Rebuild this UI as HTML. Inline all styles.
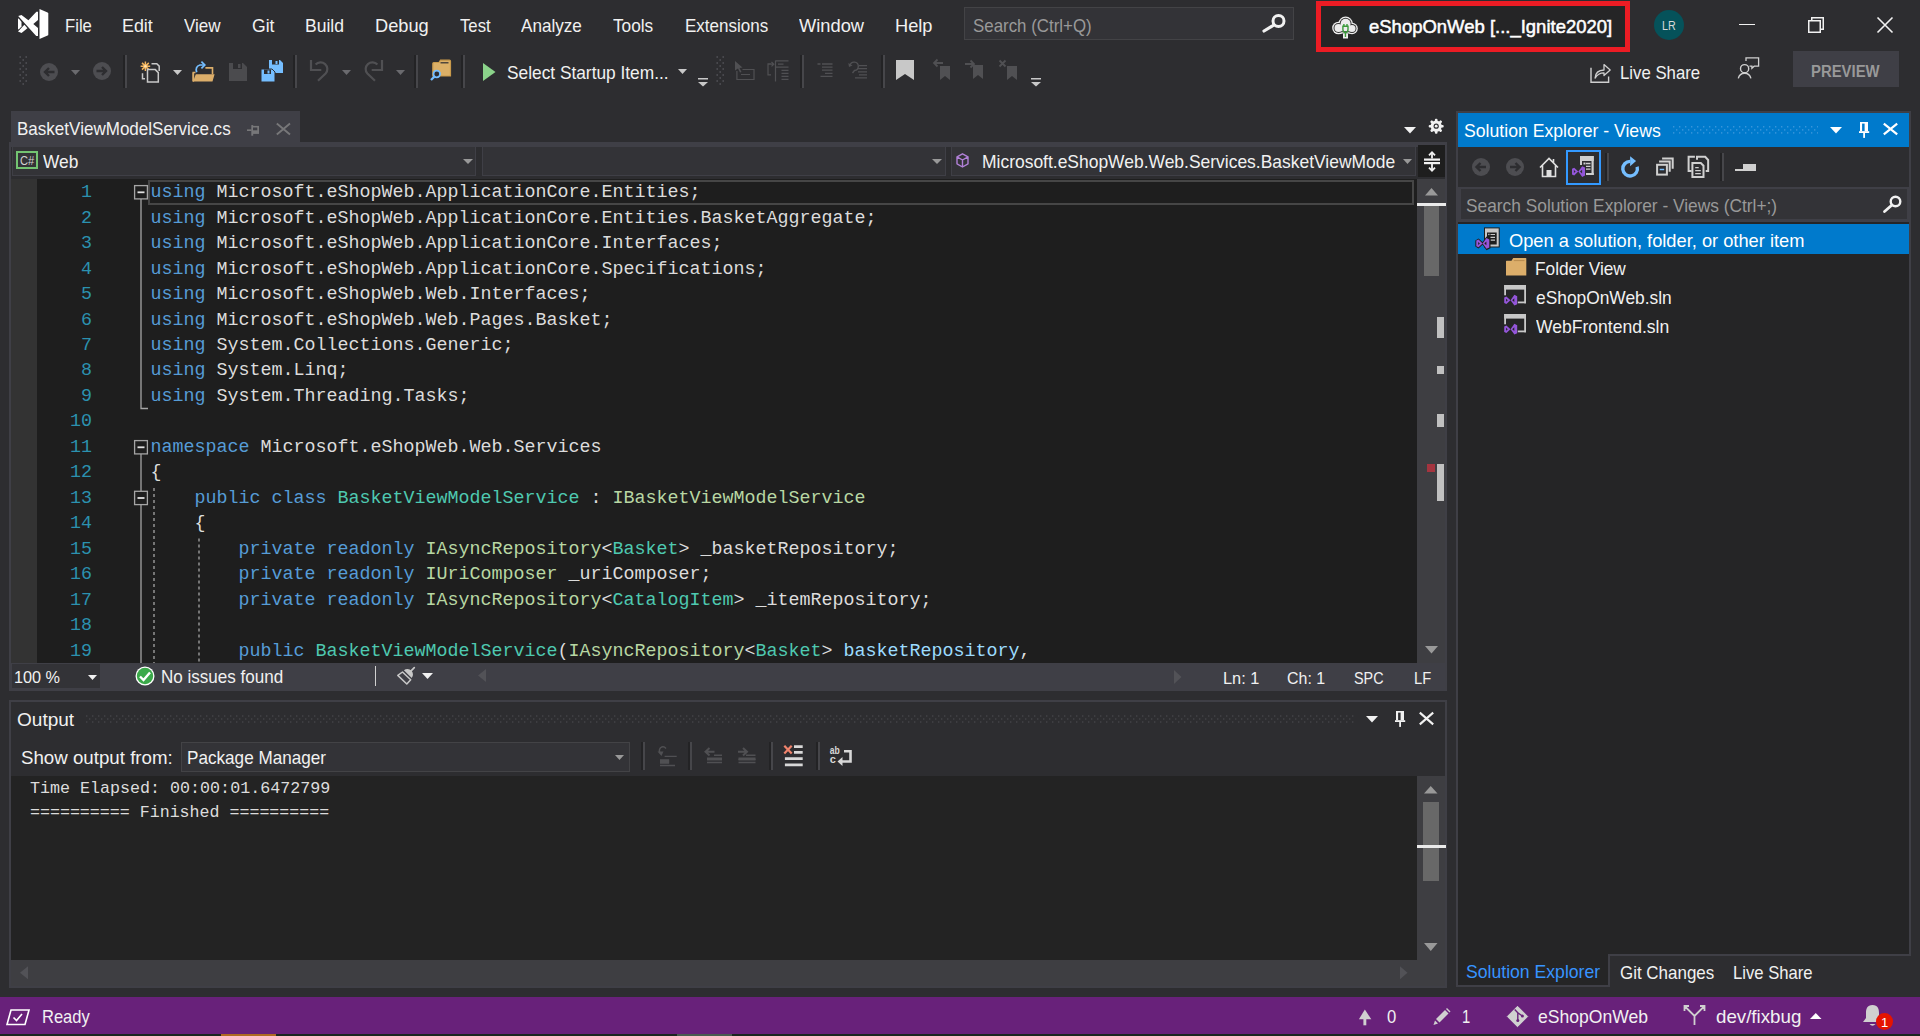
<!DOCTYPE html>
<html><head><meta charset="utf-8">
<style>
*{box-sizing:border-box;margin:0;padding:0}
html,body{width:1920px;height:1036px;overflow:hidden;background:#2D2D30;font-family:"Liberation Sans",sans-serif;color:#F1F1F1;position:relative}
.a{position:absolute}
.t{font-size:18.5px;color:#F1F1F1}
.m{font-family:"Liberation Mono",monospace}
svg{position:absolute;overflow:visible}
.sep{position:absolute;width:4px;background:linear-gradient(90deg,#232325 0,#232325 50%,#46464A 50%,#46464A 100%)}
.code{position:absolute;left:150.6px;font-family:"Liberation Mono",monospace;font-size:18.33px;line-height:25.48px;white-space:pre;color:#DCDCDC}
.ln{position:absolute;font-family:"Liberation Mono",monospace;font-size:18.33px;line-height:25.48px;white-space:pre;color:#2B91AF;text-align:right;width:60px;left:32px}
.k{color:#569CD6}.c{color:#4EC9B0}.i{color:#B8D7A3}.p{color:#9CDCFE}
</style></head>
<body>
<!--MENUBAR-->
<svg style="left:0;top:0" width="60" height="50" viewBox="0 0 60 50">
  <path d="M39.5 9 L47.6 12.4 Q48.3 12.9 48.3 13.6 V34.4 Q48.3 35.1 47.6 35.6 L39.5 39 Z" fill="#fff"></path>
  <path d="M18.2 16.1 L21.5 14.9 L28.4 20.3 L36.4 11.7 H38 V19.9 L33.3 24.1 L38 28.1 V36.1 H36.2 Z" fill="#fff"></path>
  <path d="M24.4 24.8 L27.4 28.2 L21.5 32.9 L18 31.5 Z" fill="#fff"></path>
  <path d="M18 18.2 Q19.5 18.8 21.5 22 V26.5 Q19.5 29 18 29.6 Z" fill="#fff"></path>
</svg>
<span class="t" style="position:absolute;left:65.40px;top:17.01px;line-height:18.5px;white-space:pre;transform:scaleX(0.9011);transform-origin:0 0">File</span>
<span class="t" style="position:absolute;left:122.33px;top:17.01px;line-height:18.5px;white-space:pre;transform:scaleX(0.9662);transform-origin:0 0">Edit</span>
<span class="t" style="position:absolute;left:183.80px;top:17.01px;line-height:18.5px;white-space:pre;transform:scaleX(0.9207);transform-origin:0 0">View</span>
<span class="t" style="position:absolute;left:252.00px;top:17.01px;line-height:18.5px;white-space:pre;transform:scaleX(0.9489);transform-origin:0 0">Git</span>
<span class="t" style="position:absolute;left:304.55px;top:17.01px;line-height:18.5px;white-space:pre;transform:scaleX(0.9486);transform-origin:0 0">Build</span>
<span class="t" style="position:absolute;left:374.81px;top:17.01px;line-height:18.5px;white-space:pre;transform:scaleX(0.9863);transform-origin:0 0">Debug</span>
<span class="t" style="position:absolute;left:460.00px;top:17.01px;line-height:18.5px;white-space:pre;transform:scaleX(0.9027);transform-origin:0 0">Test</span>
<span class="t" style="position:absolute;left:521.30px;top:17.01px;line-height:18.5px;white-space:pre;transform:scaleX(0.9248);transform-origin:0 0">Analyze</span>
<span class="t" style="position:absolute;left:613.30px;top:17.01px;line-height:18.5px;white-space:pre;transform:scaleX(0.9316);transform-origin:0 0">Tools</span>
<span class="t" style="position:absolute;left:684.58px;top:17.01px;line-height:18.5px;white-space:pre;transform:scaleX(0.9188);transform-origin:0 0">Extensions</span>
<span class="t" style="position:absolute;left:799.30px;top:17.01px;line-height:18.5px;white-space:pre;transform:scaleX(0.9889);transform-origin:0 0">Window</span>
<span class="t" style="position:absolute;left:895.32px;top:17.01px;line-height:18.5px;white-space:pre;transform:scaleX(0.9848);transform-origin:0 0">Help</span>

<div class="a" style="left:964px;top:7px;width:330px;height:33px;background:#333337;border:1px solid #434346"></div>
<span class="t" style="color:#999999;position:absolute;left:972.50px;top:17.01px;line-height:18.5px;white-space:pre;transform:scaleX(0.9124);transform-origin:0 0">Search (Ctrl+Q)</span>
<svg style="left:1262px;top:13px" width="25" height="19" viewBox="0 0 25 19">
  <circle cx="16.5" cy="8" r="5.5" fill="none" stroke="#F1F1F1" stroke-width="3"></circle>
  <path d="M12 12 L2 18" stroke="#F1F1F1" stroke-width="3.2" stroke-linecap="round"></path>
</svg>

<div class="a" style="left:1316px;top:1px;width:314px;height:51px;border:5px solid #EC1C24;background:#252526"></div>
<svg style="left:1332px;top:16px" width="26" height="23" viewBox="0 0 26 23">
  <g fill="#F0F0F0"><circle cx="6.5" cy="12" r="6.3"></circle><circle cx="13.6" cy="7.8" r="7.3"></circle><circle cx="20" cy="12.5" r="5.8"></circle><rect x="4" y="8" width="17" height="9.5" rx="2.3"></rect></g>
  <g fill="#333333"><circle cx="6.5" cy="12" r="5"></circle><circle cx="13.6" cy="7.8" r="6"></circle><circle cx="20" cy="12.5" r="4.5"></circle><rect x="5.3" y="9.3" width="15" height="6.9" rx="1"></rect></g>
  <g fill="#ECECEC"><circle cx="6.5" cy="12" r="4"></circle><circle cx="13.6" cy="7.8" r="5"></circle><circle cx="20" cy="12.5" r="3.5"></circle><rect x="6.3" y="10.3" width="13.5" height="4.9"></rect></g>
  <rect x="11" y="17.5" width="5" height="5" fill="#F0F0F0"></rect>
  <path d="M10.9 10.3 H16 V13.5 Q16 16.5 13.45 16.5 Q10.9 16.5 10.9 13.5 Z M13.45 16.5 V21" fill="none" stroke="#3A9A3A" stroke-width="1.4"></path>
  <path d="M11.9 8 V10.3 M15 8 V10.3" stroke="#3A9A3A" stroke-width="1.4"></path>
</svg>
<span class="t" style="-webkit-text-stroke:0.5px #FFFFFF;color:#FFFFFF;position:absolute;left:1369.00px;top:18.01px;line-height:18.5px;white-space:pre;transform:scaleX(0.9989);transform-origin:0 0">eShopOnWeb [..._Ignite2020]</span>

<div class="a" style="left:1654px;top:9.5px;width:30px;height:30px;border-radius:50%;background:#05525A"></div>
<span class="t" style="font-size:12px;color:#D8D8D8;position:absolute;left:1662.00px;top:19.51px;line-height:12px;white-space:pre;transform:scaleX(0.8932);transform-origin:0 0">LR</span>
<div class="a" style="left:1739px;top:23.5px;width:16px;height:1.5px;background:#F1F1F1"></div>
<svg style="left:1808px;top:17px" width="16" height="16" viewBox="0 0 16 16">
  <rect x="0.75" y="3.75" width="11.5" height="11.5" fill="none" stroke="#F1F1F1" stroke-width="1.5"></rect>
  <path d="M3.75 3.75 V0.75 H15.25 V12.25 H12.25" fill="none" stroke="#F1F1F1" stroke-width="1.5"></path>
</svg>
<svg style="left:1877px;top:17px" width="16" height="16" viewBox="0 0 16 16">
  <path d="M0.5 0.5 L15.5 15.5 M15.5 0.5 L0.5 15.5" stroke="#F1F1F1" stroke-width="1.6"></path>
</svg>

<!--TOOLBAR-->
<svg style="left:19px;top:56px" width="9" height="30" viewBox="0 0 9 30">
  <g fill="#5A5A5E"><rect x="0.5" y="0.3" width="1.4" height="1.4"></rect><rect x="6.5" y="0.3" width="1.4" height="1.4"></rect><rect x="3.5" y="3.3" width="1.4" height="1.4"></rect><rect x="0.5" y="6.3" width="1.4" height="1.4"></rect><rect x="6.5" y="6.3" width="1.4" height="1.4"></rect><rect x="3.5" y="9.3" width="1.4" height="1.4"></rect><rect x="0.5" y="12.3" width="1.4" height="1.4"></rect><rect x="6.5" y="12.3" width="1.4" height="1.4"></rect><rect x="3.5" y="15.3" width="1.4" height="1.4"></rect><rect x="0.5" y="18.3" width="1.4" height="1.4"></rect><rect x="6.5" y="18.3" width="1.4" height="1.4"></rect><rect x="3.5" y="21.3" width="1.4" height="1.4"></rect><rect x="0.5" y="24.3" width="1.4" height="1.4"></rect><rect x="6.5" y="24.3" width="1.4" height="1.4"></rect><rect x="3.5" y="27.3" width="1.4" height="1.4"></rect></g>
</svg>
<svg style="left:40px;top:62.5px" width="18" height="18" viewBox="0 0 18 18">
  <circle cx="9" cy="9" r="9" fill="#4D4D51"></circle>
  <path d="M14.5 9 H5.5 M9 5 L5 9 L9 13" fill="none" stroke="#2D2D30" stroke-width="2.4"></path>
</svg>
<svg style="left:71px;top:70px" width="9" height="5" viewBox="0 0 9 5"><path d="M0 0 H9 L4.5 5 Z" fill="#6A6A6E"></path></svg>
<svg style="left:93px;top:62px" width="18" height="18" viewBox="0 0 18 18">
  <circle cx="9" cy="9" r="9" fill="#4D4D51"></circle>
  <path d="M3.5 9 H12.5 M9 5 L13 9 L9 13" fill="none" stroke="#2D2D30" stroke-width="2.4"></path>
</svg>
<div class="sep" style="left:123px;top:55px;height:33px"></div>
<svg style="left:140px;top:61px" width="21" height="22" viewBox="0 0 21 22">
  <path d="M5.4 0.5 V10 M0.6 5.25 H10.2 M2 1.85 L8.8 8.65 M8.8 1.85 L2 8.65" stroke="#F2B55E" stroke-width="1.5"></path>
  <circle cx="5.4" cy="5.25" r="1.3" fill="#FFE3B0"></circle>
  <path d="M11.5 2.75 H16.8 L19.2 5.1 V10" fill="none" stroke="#C8C8C8" stroke-width="1.5"></path>
  <path d="M7.5 8.6 H15.3 L18.3 11.6 V21.1 H7.5 Z" fill="#2D2D30" stroke="#C8C8C8" stroke-width="1.5"></path>
  <path d="M2.5 12.3 V17.75 H5" fill="none" stroke="#C8C8C8" stroke-width="1.5"></path>
</svg>
<svg style="left:173px;top:70px" width="9" height="5" viewBox="0 0 9 5"><path d="M0 0 H9 L4.5 5 Z" fill="#C8C8C8"></path></svg>
<svg style="left:192px;top:60px" width="24" height="22" viewBox="0 0 24 22">
  <path d="M1.3 21.25 V12.5 H3.5 M13.4 7.9 H20.5 V14.2" fill="none" stroke="#DCAE6A" stroke-width="1.6"></path>
  <path d="M3.8 14.2 H22.6 L20.5 21.6 H1 Z" fill="#DCAE6A"></path>
  <path d="M1.3 12.5 V21.6" stroke="#DCAE6A" stroke-width="1.6"></path>
  <path d="M4.7 12.2 Q2.8 6.5 8 5 H12" fill="none" stroke="#75BEFF" stroke-width="1.7"></path>
  <path d="M9.4 1.6 L12.8 5 L9.4 8.4" fill="none" stroke="#75BEFF" stroke-width="1.7"></path>
</svg>
<svg style="left:229px;top:62.5px" width="18" height="18" viewBox="0 0 18 18">
  <path d="M0 0 H14 L18 4 V18 H0 Z" fill="#4B4B4E"></path>
  <rect x="4" y="0" width="9" height="6" fill="#2D2D30"></rect><rect x="9" y="1" width="2.5" height="4" fill="#4B4B4E"></rect>
</svg>
<svg style="left:261px;top:60px" width="22" height="22" viewBox="0 0 22 22">
  <path d="M8 0 H19 L22 3 V13 H8 Z" fill="#75BEFF"></path>
  <rect x="11" y="0" width="7" height="4.5" fill="#2D2D30"></rect><rect x="14.5" y="1" width="2" height="3" fill="#75BEFF"></rect>
  <path d="M0 9 H11 L14 12 V22 H0 Z" fill="#75BEFF" stroke="#2D2D30" stroke-width="1"></path>
  <rect x="3" y="9.5" width="7" height="4.5" fill="#2D2D30"></rect><rect x="6.5" y="10.5" width="2" height="3" fill="#75BEFF"></rect>
</svg>
<div class="sep" style="left:293px;top:55px;height:33px"></div>
<svg style="left:309.5px;top:60px" width="18" height="22" viewBox="0 0 18 22">
  <path d="M1 0 V10 H11.3" fill="none" stroke="#505053" stroke-width="2.2"></path>
  <path d="M5.6 4.6 A6.5 6.5 0 0 1 15.6 13.6 L8 20.8" fill="none" stroke="#505053" stroke-width="2.2"></path>
</svg>
<svg style="left:342px;top:70px" width="9" height="5" viewBox="0 0 9 5"><path d="M0 0 H9 L4.5 5 Z" fill="#6A6A6E"></path></svg>
<svg style="left:364.5px;top:60px" width="18" height="22" viewBox="0 0 18 22">
  <g transform="translate(18 0) scale(-1 1)">
  <path d="M1 0 V10 H11.3" fill="none" stroke="#505053" stroke-width="2.2"></path>
  <path d="M5.6 4.6 A6.5 6.5 0 0 1 15.6 13.6 L8 20.8" fill="none" stroke="#505053" stroke-width="2.2"></path>
  </g>
</svg>
<svg style="left:396px;top:70px" width="9" height="5" viewBox="0 0 9 5"><path d="M0 0 H9 L4.5 5 Z" fill="#6A6A6E"></path></svg>
<div class="sep" style="left:414px;top:55px;height:33px"></div>
<svg style="left:430px;top:59px" width="22" height="22" viewBox="0 0 22 22">
  <path d="M2.8 17 V4.5 Q2.8 3.5 3.8 3.5 H9 L10.5 1.2 H19.5 Q20.5 1.2 20.5 2.2 V17 Z" fill="#DCB067" stroke="#C99A4B" stroke-width="1.2"></path>
  <path d="M10.5 3.8 H18.5" stroke="#2D2D30" stroke-width="1.2"></path>
  <circle cx="6.8" cy="15" r="3.3" fill="#2D2D30" stroke="#75BEFF" stroke-width="1.8"></circle>
  <path d="M4.6 17.4 L1 21" stroke="#75BEFF" stroke-width="2.2"></path>
</svg>
<div class="sep" style="left:461px;top:55px;height:33px"></div>
<svg style="left:483px;top:63px" width="12.5" height="18" viewBox="0 0 12.5 18"><path d="M0 0 L12.5 9 L0 18 Z" fill="#8BD38A"></path></svg>
<span class="t" style="position:absolute;left:507.00px;top:64.01px;line-height:18.5px;white-space:pre;transform:scaleX(0.9353);transform-origin:0 0">Select Startup Item...</span>
<svg style="left:678px;top:69px" width="9" height="5" viewBox="0 0 9 5"><path d="M0 0 H9 L4.5 5 Z" fill="#C8C8C8"></path></svg>
<svg style="left:697.5px;top:77.5px" width="10" height="9" viewBox="0 0 10 9"><rect x="0" y="0" width="10" height="1.5" fill="#C8C8C8"></rect><path d="M0 4 H10 L5 8.5 Z" fill="#C8C8C8"></path></svg>
<svg style="left:716px;top:56px" width="9" height="30" viewBox="0 0 9 30">
  <g fill="#5A5A5E"><rect x="0.5" y="0.3" width="1.4" height="1.4"></rect><rect x="6.5" y="0.3" width="1.4" height="1.4"></rect><rect x="3.5" y="3.3" width="1.4" height="1.4"></rect><rect x="0.5" y="6.3" width="1.4" height="1.4"></rect><rect x="6.5" y="6.3" width="1.4" height="1.4"></rect><rect x="3.5" y="9.3" width="1.4" height="1.4"></rect><rect x="0.5" y="12.3" width="1.4" height="1.4"></rect><rect x="6.5" y="12.3" width="1.4" height="1.4"></rect><rect x="3.5" y="15.3" width="1.4" height="1.4"></rect><rect x="0.5" y="18.3" width="1.4" height="1.4"></rect><rect x="6.5" y="18.3" width="1.4" height="1.4"></rect><rect x="3.5" y="21.3" width="1.4" height="1.4"></rect><rect x="0.5" y="24.3" width="1.4" height="1.4"></rect><rect x="6.5" y="24.3" width="1.4" height="1.4"></rect><rect x="3.5" y="27.3" width="1.4" height="1.4"></rect></g>
</svg>
<svg style="left:734px;top:60px" width="22" height="21" viewBox="0 0 22 21">
  <path d="M1 1 L8.5 7.5 L5.5 8 L7.5 12 L6 12.5 L4 8.5 L1 10.5 Z" fill="#505053"></path>
  <path d="M2.9 11 V19.5 H20 V9.5 H8.5 M7 14.5 H16" fill="none" stroke="#505053" stroke-width="1.2"></path>
</svg>
<svg style="left:767px;top:60px" width="22" height="22" viewBox="0 0 22 22">
  <path d="M4 3.8 H1 V14.8 H4 M1 4.2 H6 M4.5 2 L6.8 4.2 L4.5 6.4" fill="none" stroke="#505053" stroke-width="1.2"></path>
  <path d="M8.5 0.5 V21.5 M8.5 0.8 H21.5 M8.5 7.2 H21.5 M11 4.2 H16.5 M14.5 10.3 H21.5 M14.5 13.3 H21.5 M14.5 16.3 H21.5 M14.5 19.3 H21.5" fill="none" stroke="#505053" stroke-width="1.2"></path>
</svg>
<div class="sep" style="left:800px;top:55px;height:33px"></div>
<svg style="left:817px;top:62px" width="16" height="16" viewBox="0 0 16 16">
  <path d="M0.5 2 H3.5 M5 2 H15.5 M5 5.1 H15.5 M5 8.1 H15.5 M8 11.3 H15.5 M3.5 14.4 H15.5" stroke="#505053" stroke-width="1.3"></path>
</svg>
<svg style="left:848px;top:61px" width="20" height="19" viewBox="0 0 20 19">
  <path d="M2 4.5 A4.2 4.2 0 1 1 6.5 9.5 L4.5 12" fill="none" stroke="#505053" stroke-width="1.4"></path>
  <path d="M0.3 2 L1 6 L4.5 4.5 Z" fill="#505053"></path>
  <path d="M11 4.6 H19 M10 7.7 H19 M10 10.8 H19 M11 13.8 H19 M7 16.9 H19" stroke="#505053" stroke-width="1.3"></path>
</svg>
<div class="sep" style="left:881px;top:55px;height:33px"></div>
<svg style="left:896px;top:60px" width="18" height="20" viewBox="0 0 18 20"><path d="M0 0 H18 V20 L9 14 L0 20 Z" fill="#C8C8C8"></path></svg>
<svg style="left:933px;top:60px" width="17" height="20" viewBox="0 0 17 20">
  <path d="M7 6 H17 V20 L12 16 L7 20 Z" fill="#505053"></path>
  <path d="M10 3 H1 M4.5 -0.5 L1 3 L4.5 6.5" fill="none" stroke="#505053" stroke-width="1.8"></path>
</svg>
<svg style="left:965px;top:60px" width="18" height="19" viewBox="0 0 18 19">
  <path d="M8 5 H18 V19 L13 15 L8 19 Z" fill="#505053"></path>
  <path d="M0 4 H9 M5.5 0.5 L9 4 L5.5 7.5" fill="none" stroke="#505053" stroke-width="1.8"></path>
</svg>
<svg style="left:999px;top:60px" width="18" height="20" viewBox="0 0 18 20">
  <path d="M8 6 H18 V20 L13 16 L8 20 Z" fill="#505053"></path>
  <path d="M0.5 0.5 L6.5 6.5 M6.5 0.5 L0.5 6.5" stroke="#505053" stroke-width="1.8"></path>
</svg>
<svg style="left:1031px;top:77.5px" width="10" height="9" viewBox="0 0 10 9"><rect x="0" y="0" width="10" height="1.5" fill="#C8C8C8"></rect><path d="M0 4 H10 L5 8.5 Z" fill="#C8C8C8"></path></svg>

<svg style="left:1590px;top:62px" width="22" height="22" viewBox="0 0 22 22">
  <path d="M1 5.7 V20.3 H18.6 V14.6" fill="none" stroke="#D0D0D0" stroke-width="1.4"></path>
  <path d="M5.1 16.1 Q5.5 8.2 14 8 V2.6 L20.2 7.9 L14 13.6 V10.8 Q8 10.8 5.1 16.1 Z" fill="none" stroke="#D0D0D0" stroke-width="1.3" stroke-linejoin="round"></path>
</svg>
<span class="t" style="position:absolute;left:1620.09px;top:64.01px;line-height:18.5px;white-space:pre;transform:scaleX(0.9064);transform-origin:0 0">Live Share</span>
<svg style="left:1737px;top:57px" width="23" height="23" viewBox="0 0 23 23">
  <circle cx="7.6" cy="11.7" r="4.1" fill="none" stroke="#D0D0D0" stroke-width="1.4"></circle>
  <path d="M1.3 21.3 Q2.5 16.2 7.6 16.2 Q12.7 16.2 13.9 21.3" fill="none" stroke="#D0D0D0" stroke-width="1.4"></path>
  <path d="M9 4 V0.9 H21.6 V9.2 H17.2 L14.9 11.2 V9.2 H12.5" fill="none" stroke="#D0D0D0" stroke-width="1.3"></path>
</svg>
<div class="a" style="left:1793px;top:51px;width:106px;height:36px;background:#3F3F46"></div>
<span class="t" style="font-weight:bold;font-size:16px;color:#999999;position:absolute;left:1811.07px;top:63.50px;line-height:16px;white-space:pre;transform:scaleX(0.9296);transform-origin:0 0">PREVIEW</span>
<!--/TOOLBAR-->
<!--DOCTAB-->
<div class="a" style="left:11px;top:111px;width:289px;height:31px;background:#3F3F46"></div>
<span class="t" style="position:absolute;left:16.58px;top:120.01px;line-height:18.5px;white-space:pre;transform:scaleX(0.9208);transform-origin:0 0">BasketViewModelService.cs</span>
<svg style="left:247px;top:125px" width="13" height="11" viewBox="0 0 13 11">
  <rect x="0" y="4.4" width="4.5" height="1.6" fill="#777779"></rect>
  <rect x="4.3" y="0.1" width="1.9" height="10.6" fill="#777779"></rect>
  <rect x="6" y="0.9" width="6" height="8" fill="#777779"></rect>
  <rect x="6" y="2.5" width="4.3" height="2.8" fill="#3F3F46"></rect>
</svg>
<svg style="left:276px;top:123px" width="15" height="12" viewBox="0 0 15 12">
  <path d="M0.8 0.6 L14 11.4 M14 0.6 L0.8 11.4" stroke="#777779" stroke-width="1.9"></path>
</svg>
<svg style="left:1404px;top:126.5px" width="12" height="7" viewBox="0 0 12 7"><path d="M0 0 H12 L6 6.5 Z" fill="#F1F1F1"></path></svg>
<svg style="left:1428.2px;top:118.4px" width="16.4" height="16.4" viewBox="0 0 16.4 16.4">
  <g fill="#F1F1F1"><circle cx="8.2" cy="8.2" r="5.6"></circle><rect x="6.9" y="0.7" width="2.6" height="15" rx="1" transform="rotate(0 8.2 8.2)"></rect><rect x="6.9" y="0.7" width="2.6" height="15" rx="1" transform="rotate(45 8.2 8.2)"></rect><rect x="6.9" y="0.7" width="2.6" height="15" rx="1" transform="rotate(90 8.2 8.2)"></rect><rect x="6.9" y="0.7" width="2.6" height="15" rx="1" transform="rotate(135 8.2 8.2)"></rect></g>
  <circle cx="8.2" cy="8.2" r="2.6" fill="#2D2D30"></circle>
  <circle cx="8.2" cy="8.2" r="1.4" fill="#F1F1F1"></circle>
</svg>

<!--EDITOR FRAME-->
<div class="a" style="left:9px;top:142px;width:1438px;height:549px;background:#3F3F46"></div>
<div class="a" style="left:11px;top:147px;width:1434px;height:32px;background:#2D2D30"></div>
<div class="a" style="left:12px;top:146px;width:464px;height:30px;background:#333337;border:1px solid #3F3F46"></div>
<div class="a" style="left:482px;top:146px;width:464px;height:30px;background:#333337;border:1px solid #3F3F46"></div>
<div class="a" style="left:951px;top:146px;width:465px;height:30px;background:#333337;border:1px solid #3F3F46"></div>
<div class="a" style="left:1418px;top:145px;width:27px;height:32px;background:#1E1E1E"></div>
<svg style="left:1424px;top:150.5px" width="16" height="21" viewBox="0 0 16 21">
  <path d="M8 1 V7.6 M8 13.1 V20" stroke="#F1F1F1" stroke-width="1.8"></path>
  <path d="M5 4.3 L8 1.2 L11 4.3 M5 16.7 L8 19.8 L11 16.7" fill="none" stroke="#F1F1F1" stroke-width="1.8"></path>
  <rect x="0" y="7.5" width="16" height="2.2" fill="#F1F1F1"></rect><rect x="0" y="11" width="16" height="2.2" fill="#F1F1F1"></rect>
</svg>
<div class="a" style="left:16px;top:151px;width:22px;height:18px;border:2px solid #73C372"></div>
<span class="t" style="font-size:12px;color:#D0D0D0;position:absolute;left:19.50px;top:154.51px;line-height:12px;white-space:pre;transform:scaleX(0.9256);transform-origin:0 0">C#</span>
<span class="t" style="position:absolute;left:42.50px;top:152.51px;line-height:18.5px;white-space:pre;transform:scaleX(0.9354);transform-origin:0 0">Web</span>
<svg style="left:462.5px;top:159px" width="10" height="5" viewBox="0 0 10 5"><path d="M0 0 H10 L5 5 Z" fill="#999999"></path></svg>
<svg style="left:932px;top:159px" width="10" height="5" viewBox="0 0 10 5"><path d="M0 0 H10 L5 5 Z" fill="#999999"></path></svg>
<svg style="left:956px;top:153px" width="13" height="15" viewBox="0 0 13 15">
  <path d="M6.5 0.8 L12 3.8 V10.8 L6.5 14 L1 10.8 V3.8 Z M1 3.8 L6.5 7 L12 3.8 M6.5 7 V14" fill="none" stroke="#B180D7" stroke-width="1.4" stroke-linejoin="round"></path>
</svg>
<span class="t" style="position:absolute;left:981.86px;top:153.01px;line-height:18.5px;white-space:pre;transform:scaleX(0.9433);transform-origin:0 0">Microsoft.eShopWeb.Web.Services.BasketViewMode</span>
<svg style="left:1403px;top:158.8px" width="9" height="5" viewBox="0 0 9 5"><path d="M0 0 H9 L4.5 5 Z" fill="#999999"></path></svg>

<!--EDITOR-->
<div class="a" style="left:11px;top:179px;width:1406px;height:484px;background:#1E1E1E"></div>
<div class="a" style="left:11px;top:179px;width:26px;height:484px;background:#333333"></div>
<div class="a" style="left:148px;top:179.5px;width:1266px;height:25px;border:2px solid #464646"></div>
<div class="ln" style="top:180.1px">1
2
3
4
5
6
7
8
9
10
11
12
13
14
15
16
17
18
19</div>
<div class="code" style="top:180.1px"><span class="k">using</span> Microsoft.eShopWeb.ApplicationCore.Entities;
<span class="k">using</span> Microsoft.eShopWeb.ApplicationCore.Entities.BasketAggregate;
<span class="k">using</span> Microsoft.eShopWeb.ApplicationCore.Interfaces;
<span class="k">using</span> Microsoft.eShopWeb.ApplicationCore.Specifications;
<span class="k">using</span> Microsoft.eShopWeb.Web.Interfaces;
<span class="k">using</span> Microsoft.eShopWeb.Web.Pages.Basket;
<span class="k">using</span> System.Collections.Generic;
<span class="k">using</span> System.Linq;
<span class="k">using</span> System.Threading.Tasks;

<span class="k">namespace</span> Microsoft.eShopWeb.Web.Services
{
    <span class="k">public</span> <span class="k">class</span> <span class="c">BasketViewModelService</span> : <span class="i">IBasketViewModelService</span>
    {
        <span class="k">private</span> <span class="k">readonly</span> <span class="i">IAsyncRepository</span>&lt;<span class="c">Basket</span>&gt; _basketRepository;
        <span class="k">private</span> <span class="k">readonly</span> <span class="i">IUriComposer</span> _uriComposer;
        <span class="k">private</span> <span class="k">readonly</span> <span class="i">IAsyncRepository</span>&lt;<span class="c">CatalogItem</span>&gt; _itemRepository;

        <span class="k">public</span> <span class="c">BasketViewModelService</span>(<span class="i">IAsyncRepository</span>&lt;<span class="c">Basket</span>&gt; <span class="p">basketRepository</span>,</div>
<!-- outlining -->
<svg style="left:0;top:0" width="1" height="1">
</svg>
<svg style="left:130px;top:179px" width="80" height="484" viewBox="130 179 80 484">
  <g fill="none" stroke="#A5A5A5" stroke-width="1.3">
    <rect x="134.6" y="185.6" width="12.8" height="13.3"></rect>
    <path d="M137.5 192.3 H144.5" stroke="#E0E0E0" stroke-width="1.8"></path>
    <path d="M141 199 V408.5 H148"></path>
    <rect x="134.6" y="440.6" width="12.8" height="13.3"></rect>
    <path d="M137.5 447.3 H144.5" stroke="#E0E0E0" stroke-width="1.8"></path>
    <path d="M141 454 V491"></path>
    <rect x="134.6" y="491.3" width="12.8" height="13.3"></rect>
    <path d="M137.5 498 H144.5" stroke="#E0E0E0" stroke-width="1.8"></path>
    <path d="M141 504.6 V663"></path>
  </g>
  <g stroke="#A5A5A5" stroke-width="1.3" stroke-dasharray="3 3">
    <path d="M154 488 V663"></path>
    <path d="M199 538.5 V663"></path>
  </g>
</svg>
<!-- vscroll -->
<div class="a" style="left:1417px;top:179px;width:28px;height:484px;background:#3E3E42"></div>
<svg style="left:1425px;top:187.5px" width="13" height="8" viewBox="0 0 13 8"><path d="M0 7.5 H13 L6.5 0 Z" fill="#999999"></path></svg>
<svg style="left:1425px;top:646px" width="13" height="8" viewBox="0 0 13 8"><path d="M0 0 H13 L6.5 7.5 Z" fill="#999999"></path></svg>
<div class="a" style="left:1423.5px;top:204px;width:15.5px;height:72px;background:#686868"></div>
<div class="a" style="left:1417px;top:203px;width:29px;height:2.5px;background:#EAEAEA"></div>
<div class="a" style="left:1437px;top:317px;width:7px;height:21px;background:#C0C0C0"></div>
<div class="a" style="left:1437px;top:365.5px;width:7px;height:8.5px;background:#C0C0C0"></div>
<div class="a" style="left:1437px;top:414px;width:7px;height:13px;background:#C0C0C0"></div>
<div class="a" style="left:1437px;top:463.5px;width:7px;height:37.5px;background:#C0C0C0"></div>
<div class="a" style="left:1427px;top:463.5px;width:7.5px;height:8.5px;background:#A4343F"></div>
<!--/EDITOR-->
<!--EDSTATUS-->
<div class="a" style="left:9px;top:663px;width:1438px;height:28px;background:#3F3F46"></div>
<div class="a" style="left:11.5px;top:664px;width:88.5px;height:24px;background:#333337"></div>
<span class="t" style="font-size:17px;position:absolute;left:14.04px;top:669.30px;line-height:17px;white-space:pre;transform:scaleX(0.9557);transform-origin:0 0">100 %</span>
<svg style="left:88px;top:674.5px" width="9" height="5" viewBox="0 0 9 5"><path d="M0 0 H9 L4.5 5 Z" fill="#F1F1F1"></path></svg>
<svg style="left:135.4px;top:665.8px" width="20" height="20" viewBox="0 0 20 20">
  <circle cx="10" cy="10" r="9.5" fill="#FFFFFF"></circle>
  <circle cx="10" cy="10" r="8.2" fill="#3BA94A"></circle>
  <path d="M5 10.5 L8.5 14 L15 6.5" fill="none" stroke="#FFFFFF" stroke-width="2.4"></path>
</svg>
<span class="t" style="position:absolute;left:160.58px;top:668.31px;line-height:18.5px;white-space:pre;transform:scaleX(0.9210);transform-origin:0 0">No issues found</span>
<div class="a" style="left:374.5px;top:666px;width:1.5px;height:20px;background:#D0D0D0"></div>
<svg style="left:396px;top:666px" width="20" height="20" viewBox="0 0 20 20">
  <path d="M1.8 9.4 L6.5 6 L14.7 13.7 L10.8 18 Z" fill="none" stroke="#C8C8C8" stroke-width="1.5" stroke-linejoin="round"></path>
  <path d="M7.9 4.3 A5.5 5.5 0 0 1 15.7 12 Z" fill="#C8C8C8"></path>
  <path d="M13.6 6.4 L18.3 1.7" stroke="#C8C8C8" stroke-width="1.7" stroke-linecap="round"></path>
</svg>
<svg style="left:422px;top:672.5px" width="11" height="6" viewBox="0 0 11 6"><path d="M0 0 H11 L5.5 6 Z" fill="#F1F1F1"></path></svg>
<svg style="left:478px;top:669px" width="8" height="13" viewBox="0 0 8 13"><path d="M8 0 V13 L0 6.5 Z" fill="#525257"></path></svg>
<svg style="left:1174px;top:669.5px" width="7.5" height="14" viewBox="0 0 7.5 14"><path d="M0 0 V14 L7.5 7 Z" fill="#525257"></path></svg>
<span class="t" style="font-size:17px;position:absolute;left:1223.04px;top:669.80px;line-height:17px;white-space:pre;transform:scaleX(0.9627);transform-origin:0 0">Ln: 1</span>
<span class="t" style="font-size:17px;position:absolute;left:1287.30px;top:669.80px;line-height:17px;white-space:pre;transform:scaleX(0.9383);transform-origin:0 0">Ch: 1</span>
<span class="t" style="font-size:17px;position:absolute;left:1354.40px;top:669.80px;line-height:17px;white-space:pre;transform:scaleX(0.8449);transform-origin:0 0">SPC</span>
<span class="t" style="font-size:17px;position:absolute;left:1413.53px;top:669.80px;line-height:17px;white-space:pre;transform:scaleX(0.8670);transform-origin:0 0">LF</span>

<!--OUTPUT-->
<div class="a" style="left:9px;top:699.5px;width:1438px;height:288px;background:#3F3F46"></div>
<div class="a" style="left:11px;top:701.5px;width:1434px;height:74.5px;background:#2D2D30"></div>
<span class="t" style="position:absolute;left:17.00px;top:710.81px;line-height:18.5px;white-space:pre;transform:scaleX(1.0290);transform-origin:0 0">Output</span>
<svg style="left:86px;top:715px" width="1268" height="9"><defs><pattern id="gp1" width="6" height="9" patternUnits="userSpaceOnUse"><rect x="0.1" y="0.4" width="1.2" height="1.2" fill="#4A4A4F"></rect><rect x="3.1" y="3.4" width="1.2" height="1.2" fill="#4A4A4F"></rect><rect x="0.1" y="6.4" width="1.2" height="1.2" fill="#4A4A4F"></rect></pattern></defs><rect width="1268" height="9" fill="url(#gp1)"></rect></svg>
<svg style="left:1366px;top:715.5px" width="12" height="7" viewBox="0 0 12 7"><path d="M0 0 H12 L6 6.5 Z" fill="#F1F1F1"></path></svg>
<svg style="left:1394px;top:710px" width="12" height="17" viewBox="0 0 12 17">
  <rect x="2" y="1" width="8" height="9.4" fill="#F1F1F1"></rect>
  <rect x="4.1" y="2.6" width="2.5" height="7.7" fill="#2D2D30"></rect>
  <rect x="1" y="10.2" width="10.2" height="1.8" fill="#F1F1F1"></rect>
  <rect x="5.2" y="11.9" width="1.8" height="5" fill="#F1F1F1"></rect>
</svg>
<svg style="left:1419px;top:711.5px" width="15" height="13" viewBox="0 0 15 13">
  <path d="M0.8 0.6 L14.2 12.4 M14.2 0.6 L0.8 12.4" stroke="#F1F1F1" stroke-width="2.1"></path>
</svg>
<span class="t" style="position:absolute;left:21.40px;top:748.51px;line-height:18.5px;white-space:pre;transform:scaleX(1.0108);transform-origin:0 0">Show output from:</span>
<div class="a" style="left:181px;top:741.5px;width:449px;height:30px;background:#333337;border:1px solid #434346"></div>
<span class="t" style="position:absolute;left:186.57px;top:749.01px;line-height:18.5px;white-space:pre;transform:scaleX(0.9262);transform-origin:0 0">Package Manager</span>
<svg style="left:615.4px;top:754.5px" width="9" height="5" viewBox="0 0 9 5"><path d="M0 0 H9 L4.5 5 Z" fill="#999999"></path></svg>
<div class="sep" style="left:640.5px;top:742px;height:28px"></div>
<div class="sep" style="left:688px;top:742px;height:28px"></div>
<div class="sep" style="left:768.5px;top:742px;height:28px"></div>
<div class="sep" style="left:815.5px;top:742px;height:28px"></div>
<svg style="left:656px;top:745px" width="22" height="22" viewBox="0 0 22 22">
  <path d="M5 9 Q2 6 4.5 2.8 Q7.5 0.5 10 3.5" fill="none" stroke="#505053" stroke-width="1.4"></path>
  <path d="M1.5 6.5 L5.5 11 L7.5 6.5 Z" fill="#505053"></path>
  <path d="M8.6 11.3 H20.7 M4 20.5 H19" stroke="#505053" stroke-width="1.3"></path>
  <rect x="4" y="14.2" width="9.2" height="4.6" fill="#505053"></rect>
</svg>
<svg style="left:703px;top:746px" width="20" height="18" viewBox="0 0 20 18">
  <path d="M11.5 5.7 H3 M6.5 2 L2.5 5.7 L6.5 9.4" fill="none" stroke="#505053" stroke-width="2"></path>
  <path d="M11 9.2 H19 M4 13.4 H19 M4 16.6 H19" stroke="#505053" stroke-width="1.5"></path>
  <rect x="4" y="11.5" width="15" height="2.8" fill="#505053"></rect>
</svg>
<svg style="left:737px;top:746px" width="20" height="18" viewBox="0 0 20 18">
  <path d="M1 5.7 H9.5 M6 2 L10 5.7 L6 9.4" fill="none" stroke="#505053" stroke-width="2"></path>
  <path d="M9 9.2 H18.5 M1.5 13.4 H18.5 M1.5 16.6 H18.5" stroke="#505053" stroke-width="1.5"></path>
  <rect x="1.5" y="11.5" width="17" height="2.8" fill="#505053"></rect>
</svg>
<svg style="left:783px;top:744px" width="21" height="23" viewBox="0 0 21 23">
  <path d="M1.3 1.8 L8.7 9.5 M8.7 1.8 L1.3 9.5" stroke="#F0836C" stroke-width="2.2"></path>
  <path d="M11 2.6 H19.7 M11 8.4 H19.7 M1.9 14.6 H19.7 M1.9 20.9 H19.7" stroke="#D8D8D8" stroke-width="2.8"></path>
</svg>
<svg style="left:829px;top:744px" width="24" height="23" viewBox="0 0 24 23">
  <text x="0.8" y="10" font-size="11" font-family="Liberation Sans" font-weight="bold" fill="#D8D8D8" textLength="10" lengthAdjust="spacingAndGlyphs">ab</text>
  <text x="0.8" y="19.2" font-size="11" font-family="Liberation Sans" font-weight="bold" fill="#D8D8D8">c</text>
  <path d="M15 7.2 H21.5 V17.5 H11.5" fill="none" stroke="#D8D8D8" stroke-width="2.6"></path>
  <path d="M8.5 17.5 L13.5 13 V22 Z" fill="#D8D8D8"></path>
</svg>
<div class="a" style="left:11px;top:776px;width:1406px;height:183.5px;background:#232323"></div>
<div class="a m" style="left:29px;top:776px;font-size:16.67px;line-height:23.4px;white-space:pre;color:#DCDCDC;padding-top:0px"></div>
<span class="t m" style="font-size:16.67px;color:#DCDCDC;position:absolute;left:29.50px;top:780.61px;line-height:16.67px;white-space:pre;transform:scaleX(1.0011);transform-origin:0 0">Time Elapsed: 00:00:01.6472799</span>
<span class="t m" style="font-size:16.67px;color:#DCDCDC;position:absolute;left:29.50px;top:804.50px;line-height:16.67px;white-space:pre;transform:scaleX(0.9978);transform-origin:0 0">========== Finished ==========</span>
<div class="a" style="left:1417px;top:776px;width:28px;height:183.5px;background:#3E3E42"></div>
<svg style="left:1424px;top:785.5px" width="13.5" height="7.5" viewBox="0 0 13.5 7.5"><path d="M0 7.5 H13.5 L6.75 0 Z" fill="#999999"></path></svg>
<svg style="left:1424px;top:943px" width="13.5" height="8" viewBox="0 0 13.5 8"><path d="M0 0 H13.5 L6.75 8 Z" fill="#999999"></path></svg>
<div class="a" style="left:1423px;top:802px;width:16px;height:79px;background:#686868"></div>
<div class="a" style="left:1416.5px;top:845px;width:29px;height:3px;background:#EAEAEA"></div>
<div class="a" style="left:11px;top:959.5px;width:1434px;height:26px;background:#3E3E42"></div>
<svg style="left:20px;top:965.8px" width="8" height="13.5" viewBox="0 0 8 13"><path d="M8 0 V13 L0 6.5 Z" fill="#525257"></path></svg>
<svg style="left:1400px;top:965.8px" width="7.5" height="13.5" viewBox="0 0 7.5 13"><path d="M0 0 V13 L7.5 6.5 Z" fill="#525257"></path></svg>
<!--/OUTPUT-->
<!--SE-->
<div class="a" style="left:1456px;top:111px;width:455px;height:876px;background:#3F3F46"></div>
<div class="a" style="left:1458px;top:113px;width:451px;height:34px;background:#007ACC"></div>
<span class="t" style="color:#FFFFFF;position:absolute;left:1464.00px;top:122.01px;line-height:18.5px;white-space:pre;transform:scaleX(0.9535);transform-origin:0 0">Solution Explorer - Views</span>
<svg style="left:1672px;top:126px" width="146" height="8"><defs><pattern id="gp2" width="6" height="9" patternUnits="userSpaceOnUse"><rect x="1.1" y="0.2" width="1.2" height="1.2" fill="#4DA0E0"></rect><rect x="4.1" y="3.3" width="1.2" height="1.2" fill="#4DA0E0"></rect><rect x="1.1" y="6.3" width="1.2" height="1.2" fill="#4DA0E0"></rect></pattern></defs><rect width="146" height="8" fill="url(#gp2)"></rect></svg>
<svg style="left:1830px;top:126.5px" width="12" height="6.5" viewBox="0 0 12 6.5"><path d="M0 0 H12 L6 6.5 Z" fill="#FFFFFF"></path></svg>
<svg style="left:1858px;top:121px" width="12" height="17" viewBox="0 0 12 17">
  <rect x="2" y="1" width="8" height="9.4" fill="#FFFFFF"></rect>
  <rect x="4.1" y="2.6" width="2.5" height="7.7" fill="#007ACC"></rect>
  <rect x="1" y="10.2" width="10.2" height="1.8" fill="#FFFFFF"></rect>
  <rect x="5.2" y="11.9" width="1.8" height="5" fill="#FFFFFF"></rect>
</svg>
<svg style="left:1883px;top:123px" width="15" height="12" viewBox="0 0 15 12">
  <path d="M0.8 0.6 L14.2 11.4 M14.2 0.6 L0.8 11.4" stroke="#FFFFFF" stroke-width="2.2"></path>
</svg>
<div class="a" style="left:1458px;top:147px;width:451px;height:40px;background:#2D2D30"></div>
<svg style="left:1472px;top:158px" width="18" height="18" viewBox="0 0 18 18">
  <circle cx="9" cy="9" r="9" fill="#4D4D51"></circle>
  <path d="M14 9 H5 M8.5 5 L4.5 9 L8.5 13" fill="none" stroke="#2D2D30" stroke-width="2.4"></path>
</svg>
<svg style="left:1506px;top:158px" width="18" height="18" viewBox="0 0 18 18">
  <circle cx="9" cy="9" r="9" fill="#4D4D51"></circle>
  <path d="M4 9 H13 M9.5 5 L13.5 9 L9.5 13" fill="none" stroke="#2D2D30" stroke-width="2.4"></path>
</svg>
<svg style="left:1538.5px;top:156.5px" width="20" height="20.5" viewBox="0 0 20 20.5">
  <path d="M1 10.5 L10 1.5 L19 10.5 M3.5 8.5 V19.5 H16.5 V8.5 M14.5 2 V6" fill="none" stroke="#E0E0E0" stroke-width="1.6"></path>
  <rect x="7.5" y="13" width="5" height="6.5" fill="#E0E0E0"></rect>
</svg>
<div class="a" style="left:1566px;top:150px;width:34.5px;height:34.5px;border:2.2px solid #3399FF;background:#2D2D30"></div>
<svg style="left:1572px;top:156px" width="22" height="22" viewBox="0 0 22 22">
  <path d="M8 0 H21.7 V19 H14" fill="none" stroke="#CFCFCF" stroke-width="0"></path>
  <rect x="8" y="0" width="13.7" height="5" fill="#CFCFCF"></rect>
  <rect x="8" y="0" width="2" height="9" fill="#CFCFCF"></rect>
  <rect x="19.5" y="0" width="2.2" height="19" fill="#CFCFCF"></rect>
  <rect x="14" y="17" width="7.7" height="2" fill="#CFCFCF"></rect>
  <rect x="11.5" y="6.5" width="2" height="2" fill="#CFCFCF"></rect>
  <path d="M14 7.5 H18.5 M14 10.3 H18.5 M14 13.2 H18.5" stroke="#CFCFCF" stroke-width="1.3"></path>
  <g transform="translate(0 9.6)"><path d="M0 3.2 L2.2 2.2 L6.3 6 L10.2 0.6 L13 2 V10 L10.2 11.4 L6.3 6 L2.2 9.8 L0 8.8 Z M1.9 4.5 V7.5 L3.6 6 Z M10.1 4.1 V7.9 L8 6 Z" fill="#9456DA" fill-rule="evenodd"></path></g>
</svg>
<div class="sep" style="left:1604.5px;top:153px;height:28px"></div>
<svg style="left:1620px;top:156px" width="20" height="22" viewBox="0 0 20 22">
  <path d="M10.1 5.4 A7.3 7.3 0 1 0 17.15 10.8" fill="none" stroke="#75BEFF" stroke-width="3.4"></path>
  <path d="M10.1 0.2 L16.1 5.1 L10.1 10.25 Z" fill="#75BEFF"></path>
</svg>
<svg style="left:1655px;top:157px" width="20" height="19" viewBox="0 0 20 19">
  <rect x="2.1" y="7.8" width="9.8" height="9.8" fill="none" stroke="#D0D0D0" stroke-width="2"></rect>
  <path d="M4.7 12.5 H9.2" stroke="#75BEFF" stroke-width="1.5"></path>
  <path d="M4.1 4.4 H14.7 V14.7" fill="none" stroke="#D0D0D0" stroke-width="2"></path>
  <path d="M7.1 1.4 H17.7 V11.7" fill="none" stroke="#D0D0D0" stroke-width="2"></path>
</svg>
<svg style="left:1687px;top:155px" width="23" height="24" viewBox="0 0 23 24">
  <path d="M7.9 1.8 H1.6 V16.1 H4.6" fill="none" stroke="#D0D0D0" stroke-width="2"></path>
  <path d="M10 4.8 V1.8 H18.2 L21.15 5 V16.1 H18.7" fill="none" stroke="#D0D0D0" stroke-width="2"></path>
  <path d="M5.4 8 H13.8 L16.5 10.7 V22.1 H5.4 Z" fill="#2D2D30" stroke="#D0D0D0" stroke-width="2"></path>
  <path d="M8.2 12.6 H11.7 M8.2 15.6 H13.8 M8.2 18.6 H13.8" stroke="#D0D0D0" stroke-width="1.4"></path>
</svg>
<div class="sep" style="left:1719.5px;top:153px;height:28px"></div>
<svg style="left:1734.5px;top:163.5px" width="21" height="7" viewBox="0 0 21 7">
  <rect x="0" y="5" width="21" height="2" fill="#D0D0D0"></rect><rect x="8" y="0" width="13" height="7" fill="#D0D0D0"></rect>
</svg>
<div class="a" style="left:1459.5px;top:187.5px;width:448px;height:32px;background:#333337;border:1px solid #3F3F46"></div>
<span class="t" style="color:#999999;position:absolute;left:1466.30px;top:196.51px;line-height:18.5px;white-space:pre;transform:scaleX(0.9364);transform-origin:0 0">Search Solution Explorer - Views (Ctrl+;)</span>
<svg style="left:1883px;top:194.5px" width="19" height="18" viewBox="0 0 19 18">
  <circle cx="12.5" cy="6.5" r="4.8" fill="none" stroke="#F1F1F1" stroke-width="2.4"></circle>
  <path d="M9 10 L1.5 16.5" stroke="#F1F1F1" stroke-width="2.8" stroke-linecap="round"></path>
</svg>
<div class="a" style="left:1458px;top:221.5px;width:451px;height:734px;background:#252526"></div>
<div class="a" style="left:1458px;top:223.75px;width:451px;height:30px;background:#007ACC"></div>
<svg style="left:1476px;top:227px" width="25" height="24" viewBox="0 0 25 24">
  <rect x="8" y="0.4" width="15.7" height="20.1" fill="#1E1E1E"></rect>
  <rect x="9" y="1.4" width="13.7" height="18.1" fill="#C8C8C8"></rect>
  <rect x="11" y="5.5" width="9.7" height="12" fill="#1E1E1E"></rect>
  <path d="M14.5 7.5 H19 M14.5 10.3 H19 M14.5 13.1 H19" stroke="#C8C8C8" stroke-width="1.2"></path>
  <rect x="12.2" y="6.8" width="1.3" height="1.3" fill="#C8C8C8"></rect>
  <g transform="translate(0.3 10.4)"><path d="M-1 3 L2.2 1 L6.3 4.6 L10.2 -0.8 L14.2 1.2 V10.8 L10.2 12.8 L6.3 7.4 L2.2 11 L-1 9 Z" fill="#1E1E1E"></path><path d="M0 3.2 L2.2 2.2 L6.3 6 L10.2 0.6 L13 2 V10 L10.2 11.4 L6.3 6 L2.2 9.8 L0 8.8 Z M1.9 4.5 V7.5 L3.6 6 Z M10.1 4.1 V7.9 L8 6 Z" fill="#9456DA" fill-rule="evenodd"></path></g>
</svg>
<span class="t" style="color:#FFFFFF;position:absolute;left:1508.75px;top:232.01px;line-height:18.5px;white-space:pre;transform:scaleX(0.9871);transform-origin:0 0">Open a solution, folder, or other item</span>
<svg style="left:1505.8px;top:258px" width="21" height="18" viewBox="0 0 21 18">
  <path d="M0 3.2 Q0 2.7 0.6 2.7 H5.5 L7.2 0 H19.8 Q20.3 0 20.3 0.6 V17.5 H0 Z" fill="#DCAE6A"></path>
  <path d="M7.8 2.6 H18.5" stroke="#B88C4E" stroke-width="1"></path>
</svg>
<span class="t" style="position:absolute;left:1534.82px;top:260.01px;line-height:18.5px;white-space:pre;transform:scaleX(0.9332);transform-origin:0 0">Folder View</span>
<svg style="left:1504px;top:285.4px" width="23" height="22" viewBox="0 0 23 22">
  <rect x="0.2" y="0" width="21.8" height="4.6" fill="#C8C8C8"></rect>
  <rect x="0.2" y="0" width="1.8" height="10.3" fill="#C8C8C8"></rect>
  <rect x="20.2" y="0" width="1.8" height="18.3" fill="#C8C8C8"></rect>
  <rect x="13.8" y="16.5" width="8.2" height="1.8" fill="#C8C8C8"></rect>
  <g transform="translate(0.2 9.2)"><path d="M0 3.2 L2.2 2.2 L6.3 6 L10.2 0.6 L13 2 V10 L10.2 11.4 L6.3 6 L2.2 9.8 L0 8.8 Z M1.9 4.5 V7.5 L3.6 6 Z M10.1 4.1 V7.9 L8 6 Z" fill="#9456DA" fill-rule="evenodd"></path></g>
</svg>
<span class="t" style="position:absolute;left:1535.75px;top:288.76px;line-height:18.5px;white-space:pre;transform:scaleX(0.9385);transform-origin:0 0">eShopOnWeb.sln</span>
<svg style="left:1504px;top:313.9px" width="23" height="22" viewBox="0 0 23 22">
  <rect x="0.2" y="0" width="21.8" height="4.6" fill="#C8C8C8"></rect>
  <rect x="0.2" y="0" width="1.8" height="10.3" fill="#C8C8C8"></rect>
  <rect x="20.2" y="0" width="1.8" height="18.3" fill="#C8C8C8"></rect>
  <rect x="13.8" y="16.5" width="8.2" height="1.8" fill="#C8C8C8"></rect>
  <g transform="translate(0.2 9.2)"><path d="M0 3.2 L2.2 2.2 L6.3 6 L10.2 0.6 L13 2 V10 L10.2 11.4 L6.3 6 L2.2 9.8 L0 8.8 Z M1.9 4.5 V7.5 L3.6 6 Z M10.1 4.1 V7.9 L8 6 Z" fill="#9456DA" fill-rule="evenodd"></path></g>
</svg>
<span class="t" style="position:absolute;left:1535.75px;top:317.51px;line-height:18.5px;white-space:pre;transform:scaleX(0.9483);transform-origin:0 0">WebFrontend.sln</span>
<!-- bottom tabs -->
<div class="a" style="left:1456px;top:955.5px;width:455px;height:32px;background:#2D2D30"></div>
<div class="a" style="left:1608px;top:953.5px;width:303px;height:2px;background:#3F3F46"></div>
<div class="a" style="left:1456px;top:955.5px;width:154px;height:31.5px;background:#252526;border-left:2px solid #3F3F46;border-right:2px solid #3F3F46;border-bottom:2px solid #3F3F46"></div>
<span class="t" style="color:#3794FF;position:absolute;left:1466.30px;top:963.01px;line-height:18.5px;white-space:pre;transform:scaleX(0.9522);transform-origin:0 0">Solution Explorer</span>
<span class="t" style="position:absolute;left:1620.30px;top:964.01px;line-height:18.5px;white-space:pre;transform:scaleX(0.9163);transform-origin:0 0">Git Changes</span>
<span class="t" style="position:absolute;left:1733.40px;top:964.01px;line-height:18.5px;white-space:pre;transform:scaleX(0.8995);transform-origin:0 0">Live Share</span>
<!--/SE-->

<!--STATUSBAR-->
<div class="a" style="left:0;top:997px;width:1920px;height:31px;background:#68217A"></div>
<div class="a" style="left:0;top:1028px;width:1920px;height:6px;background:#68217A"></div><div class="a" style="left:0;top:1034px;width:1920px;height:2px;background:#1B2620"></div><div class="a" style="left:677px;top:1034px;width:55px;height:2px;background:#4A5A50"></div>
<svg style="left:6px;top:1008.5px" width="24" height="16.5" viewBox="0 0 24 16.5">
  <path d="M5 1 H23 L19 15.5 H1 Z" fill="none" stroke="#FFFFFF" stroke-width="1.6"></path>
  <path d="M7.5 8.5 L10.5 11.5 L16 5" fill="none" stroke="#FFFFFF" stroke-width="1.6"></path>
</svg>
<span class="t" style="position:absolute;left:41.51px;top:1008.01px;line-height:18.5px;white-space:pre;transform:scaleX(0.8924);transform-origin:0 0">Ready</span>
<svg style="left:1358px;top:1008.5px" width="14" height="17" viewBox="0 0 14 17">
  <path d="M0.9 10.3 L6.85 0.4 L13.3 10.3 Z" fill="#D0D0D0"></path>
  <rect x="5.4" y="6" width="2.9" height="10.3" fill="#D0D0D0"></rect>
</svg>
<span class="t" style="position:absolute;left:1386.50px;top:1008.01px;line-height:18.5px;white-space:pre;transform:scaleX(0.9000);transform-origin:0 0">0</span>
<svg style="left:1432.5px;top:1007.5px" width="17.5" height="17" viewBox="0 0 17.5 17">
  <path d="M3 11 L12 2 L15.5 5.5 L6.5 14.5 Z" fill="#D0D0D0"></path>
  <path d="M2 12.5 L5 15.5 L0.5 17 Z" fill="#D0D0D0"></path>
  <path d="M13 1 L14 0 L17.5 3.5 L16.5 4.5 Z" fill="#D0D0D0"></path>
</svg>
<span class="t" style="position:absolute;left:1462.20px;top:1008.01px;line-height:18.5px;white-space:pre;transform:scaleX(0.8000);transform-origin:0 0">1</span>
<svg style="left:1506.5px;top:1005.5px" width="21" height="21" viewBox="0 0 21 21">
  <path d="M10.5 0.3 L20.7 10.5 L10.5 20.7 L0.3 10.5 Z" fill="#D0D0D0" stroke="#D0D0D0" stroke-width="1" stroke-linejoin="round"></path>
  <path d="M7.7 3.6 L10.8 6.8 V14.5 M10.8 6.8 L15.3 10" fill="none" stroke="#68217A" stroke-width="1.4"></path>
  <circle cx="10.8" cy="14.6" r="1.5" fill="#68217A"></circle><circle cx="15.4" cy="10" r="1.5" fill="#68217A"></circle>
</svg>
<span class="t" style="position:absolute;left:1538.30px;top:1008.31px;line-height:18.5px;white-space:pre;transform:scaleX(0.9491);transform-origin:0 0">eShopOnWeb</span>
<svg style="left:1682.5px;top:1004.5px" width="23" height="20" viewBox="0 0 23 20">
  <path d="M1.5 6 L1.5 1 L6 1 M21.5 6 V1 H17 M1.5 1 L11.5 11 L21.5 1 M11.5 11 V20" fill="none" stroke="#D0D0D0" stroke-width="1.8"></path>
</svg>
<span class="t" style="position:absolute;left:1715.60px;top:1008.31px;line-height:18.5px;white-space:pre;transform:scaleX(1.0114);transform-origin:0 0">dev/fixbug</span>
<svg style="left:1810px;top:1012.5px" width="11.5" height="6" viewBox="0 0 11.5 6"><path d="M0 6 H11.5 L5.75 0 Z" fill="#FFFFFF"></path></svg>
<svg style="left:1862.5px;top:1004.5px" width="19" height="22" viewBox="0 0 19 22">
  <path d="M9.5 0 C4 0 3 4 3 8 V13 L0 17 H19 L16 13 V8 C16 4 15 0 9.5 0 Z" fill="#D0D0D0"></path>
  <path d="M6.5 19 Q9.5 22.5 12.5 19 Z" fill="#D0D0D0"></path>
</svg>
<svg style="left:1876px;top:1013px" width="17" height="17" viewBox="0 0 17 17">
  <circle cx="8.5" cy="8.5" r="8.5" fill="#E51400"></circle>
  <text x="8.5" y="13.5" font-size="13" font-family="Liberation Sans" fill="#FFFFFF" text-anchor="middle">1</text>
</svg>
<div class="a" style="left:221px;top:1034px;width:55px;height:2px;background:#B06A22"></div>
<!--/STATUSBAR-->




</body></html>
